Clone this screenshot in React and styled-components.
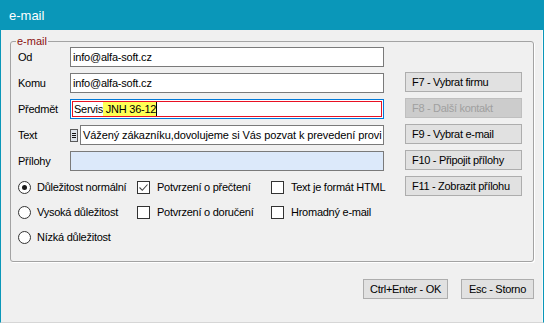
import React from "react";
import styled, { createGlobalStyle } from "styled-components";

const GlobalStyle = createGlobalStyle`
  html, body {
    margin: 0;
    padding: 0;
    background: #f0f0f0;
  }
  body {
    font-family: "Liberation Sans", Arial, sans-serif;
    font-size: 11px;
    letter-spacing: -0.25px;
    color: #000;
  }
`;

const Window = styled.div`
  width: 544px;
  height: 323px;
  display: flex;
  flex-direction: column;
  background: #f0f0f0;
`;

const TitleBar = styled.div`
  height: 30px;
  flex: none;
  background: #0a97b9;
  color: #fff;
  font-size: 13px;
  letter-spacing: 0;
  display: flex;
  align-items: center;
  padding-left: 9px;
`;

const Body = styled.div`
  flex: 1;
  box-sizing: border-box;
  border-left: 1px solid #0a97b9;
  border-right: 1px solid #0a97b9;
  border-bottom: 1px solid #d6d6d6;
  box-shadow: inset -1px 0 0 #fafafa;
  padding-left: 9px;
`;

const GroupBox = styled.div`
  position: relative;
  box-sizing: border-box;
  width: 524px;
  height: 221px;
  margin-top: 11px;
  border: 1px solid #a3a3a3;
  border-radius: 3px;
  box-shadow: 1px 1px 0 #fff;
  padding: 5px 10px 0 7px;
  display: flex;
  gap: 21px;
`;

const Legend = styled.span`
  position: absolute;
  top: -7px;
  left: 5px;
  line-height: 13px;
  padding: 0 1px;
  background: #f0f0f0;
  color: #8b1010;
  letter-spacing: 0;
`;

const LeftCol = styled.div`
  width: 366px;
  display: flex;
  flex-direction: column;
`;

const FormGrid = styled.div`
  display: grid;
  grid-template-columns: 52px 314px;
  grid-auto-rows: 20px;
  row-gap: 6px;
`;

const Label = styled.div`
  display: flex;
  align-items: center;
`;

const Input = styled.div`
  box-sizing: border-box;
  height: 20px;
  flex: 1;
  min-width: 0;
  border: 1px solid #7a7a7a;
  background: ${(p) => (p.$tint ? "#dce9fa" : "#fff")};
  padding-left: 2px;
  display: flex;
  align-items: center;
  white-space: nowrap;
  overflow: hidden;
  letter-spacing: ${(p) => (p.$wide ? "-0.1px" : "-0.2px")};
`;

const FocusInput = styled.div`
  box-sizing: border-box;
  height: 20px;
  border: 1px solid #0078d7;
  background: #fff;
  padding: 1px;
  display: flex;
`;

const InvalidFrame = styled.div`
  flex: 1;
  border: 1px solid #e81123;
  display: flex;
  align-items: center;
  padding-left: 1px;
  white-space: pre;
`;

const Highlight = styled.span`
  align-self: stretch;
  display: flex;
  align-items: center;
  background: #ffff55;
`;

const Caret = styled.span`
  align-self: stretch;
  width: 1px;
  background: #000;
`;

const FieldRow = styled.div`
  display: flex;
  align-items: center;
  gap: 2px;
  min-width: 0;
`;

const Options = styled.div`
  margin-top: 8px;
  display: grid;
  grid-template-columns: 119px 134px auto;
  grid-auto-rows: 16px;
  row-gap: 9px;
`;

const Option = styled.div`
  display: flex;
  align-items: center;
  white-space: nowrap;
  gap: ${(p) => (p.$radio ? "6px" : "7px")};
  grid-column: ${(p) => p.$col};
  grid-row: ${(p) => p.$row};
`;

const RadioDot = styled.span`
  box-sizing: border-box;
  flex: none;
  width: 13px;
  height: 13px;
  border: 1px solid #333;
  border-radius: 50%;
  background: #fff;
  display: flex;
  align-items: center;
  justify-content: center;
  &::after {
    content: "";
    width: 5px;
    height: 5px;
    border-radius: 50%;
    background: ${(p) => (p.$on ? "#1a1a1a" : "transparent")};
  }
`;

const CheckBox = styled.span`
  box-sizing: border-box;
  flex: none;
  width: 13px;
  height: 13px;
  border: 1px solid #333;
  background: #fff;
  display: flex;
  align-items: center;
  justify-content: center;
`;

const ButtonCol = styled.div`
  padding-top: 25px;
  display: flex;
  flex-direction: column;
  gap: 6px;
`;

const Button = styled.div`
  box-sizing: border-box;
  width: ${(p) => p.$w || 117}px;
  height: 20px;
  border: 1px solid ${(p) => (p.$disabled ? "#bfbfbf" : "#adadad")};
  background: ${(p) => (p.$disabled ? "#cccccc" : "#e1e1e1")};
  color: ${(p) => (p.$disabled ? "#a0a0a0" : "#000")};
  display: flex;
  align-items: center;
  justify-content: ${(p) => (p.$center ? "center" : "flex-start")};
  padding-left: ${(p) => (p.$center ? 0 : 6)}px;
  white-space: nowrap;
  letter-spacing: -0.3px;
`;

const Footer = styled.div`
  width: 524px;
  margin-top: 17px;
  display: flex;
  justify-content: flex-end;
  gap: 13px;
`;

const NoteIcon = () => (
  <svg width="8" height="13" viewBox="0 0 8 13" style={{ flex: "none" }}>
    <rect x="0.5" y="0.5" width="7" height="12" fill="#dde3ea" stroke="#5a5a5a" />
    <rect x="2" y="4" width="4" height="1" fill="#111" />
    <rect x="2" y="6" width="4" height="1" fill="#111" />
    <rect x="2" y="8" width="4" height="1" fill="#111" />
  </svg>
);

const Check = () => (
  <svg width="11" height="11" viewBox="0 0 11 11">
    <path d="M1.5 5.5 L4.3 8.3 L9.5 2.5" fill="none" stroke="#444" strokeWidth="1.1" />
  </svg>
);

const actions = [
  { text: "F7 - Vybrat firmu" },
  { text: "F8 - Další kontakt", disabled: true },
  { text: "F9 - Vybrat e-mail" },
  { text: "F10 - Připojit přílohy" },
  { text: "F11 - Zobrazit přílohu" },
];

export default function App() {
  return (
    <Window>
      <GlobalStyle />
      <TitleBar>e-mail</TitleBar>
      <Body>
        <GroupBox>
          <Legend>e-mail</Legend>
          <LeftCol>
            <FormGrid>
              <Label>Od</Label>
              <Input>info@alfa-soft.cz</Input>
              <Label>Komu</Label>
              <Input>info@alfa-soft.cz</Input>
              <Label>Předmět</Label>
              <FocusInput>
                <InvalidFrame>
                  Servis
                  <Highlight> JNH 36-12</Highlight>
                  <Caret />
                </InvalidFrame>
              </FocusInput>
              <Label>Text</Label>
              <FieldRow>
                <NoteIcon />
                <Input $wide>
                  Vážený zákazníku,dovolujeme si Vás pozvat k prevedení provi
                </Input>
              </FieldRow>
              <Label>Přílohy</Label>
              <Input $tint />
            </FormGrid>
            <Options>
              <Option $radio $col={1} $row={1}>
                <RadioDot $on />
                Důležitost normální
              </Option>
              <Option $radio $col={1} $row={2}>
                <RadioDot />
                Vysoká důležitost
              </Option>
              <Option $radio $col={1} $row={3}>
                <RadioDot />
                Nízká důležitost
              </Option>
              <Option $col={2} $row={1}>
                <CheckBox>
                  <Check />
                </CheckBox>
                Potvrzení o přečtení
              </Option>
              <Option $col={2} $row={2}>
                <CheckBox />
                Potvrzení o doručení
              </Option>
              <Option $col={3} $row={1}>
                <CheckBox />
                Text je formát HTML
              </Option>
              <Option $col={3} $row={2}>
                <CheckBox />
                Hromadný e-mail
              </Option>
            </Options>
          </LeftCol>
          <ButtonCol>
            {actions.map((a) => (
              <Button key={a.text} $disabled={a.disabled}>
                {a.text}
              </Button>
            ))}
          </ButtonCol>
        </GroupBox>
        <Footer>
          <Button $center $w={85}>
            Ctrl+Enter - OK
          </Button>
          <Button $center $w={73}>
            Esc - Storno
          </Button>
        </Footer>
      </Body>
    </Window>
  );
}
